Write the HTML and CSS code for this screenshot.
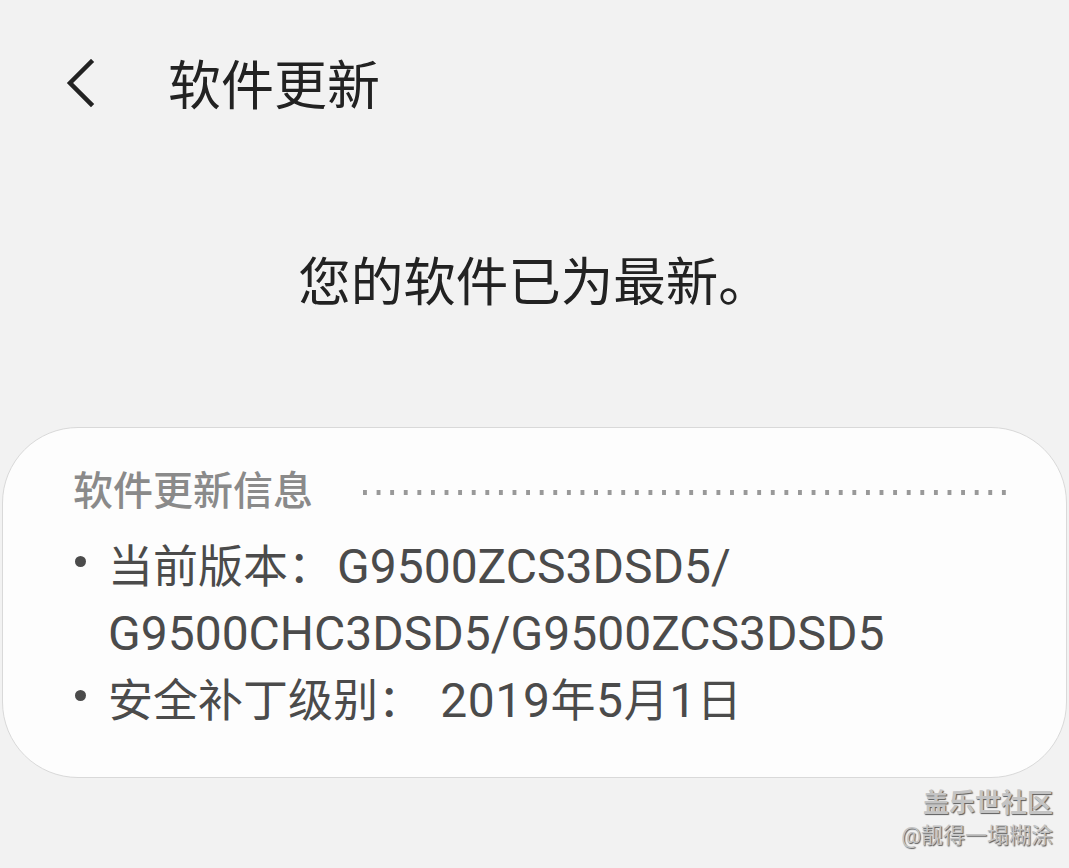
FILE: index.html
```html
<!DOCTYPE html>
<html lang="zh-CN">
<head>
    <meta charset="UTF-8">
    <meta name="viewport" content="width=device-width, initial-scale=1.0">
    <title>软件更新</title>
    <link rel="stylesheet" href="styles.css">
</head>
<body>
    <header class="topbar">
        <button class="back-button" aria-label="返回">
            <svg width="36" height="50" viewBox="0 0 36 50">
                <path d="M27 3 L6 24 L27 45" fill="none" stroke="#222" stroke-width="4.5" stroke-linecap="square"/>
            </svg>
        </button>
        <h1 class="page-title">软件更新</h1>
    </header>

    <section class="status">
        <p class="status-text">您的软件已为最新。</p>
    </section>

    <section class="info-card">
        <div class="info-header">
            <h2 class="info-title">软件更新信息</h2>
            <span class="info-dots"></span>
        </div>
        <ul class="info-list">
            <li class="info-item">
                <span>当前版本：<span class="code first">G9500ZCS3DSD5/</span><br><span class="code">G9500CHC3DSD5/G9500ZCS3DSD5</span></span>
            </li>
            <li class="info-item">
                <span>安全补丁级别： <span class="date"><span class="code">2019</span>年<span class="code">5</span>月<span class="code">1</span>日</span></span>
            </li>
        </ul>
    </section>

    <div class="watermark">
        <div class="watermark-name">盖乐世社区</div>
        <div class="watermark-user">@靓得一塌糊涂</div>
    </div>
</body>
</html>
```

FILE: styles.css
```css
:root {
    --page-bg: #f2f2f2;
    --card-bg: #fdfdfd;
    --text-dark: #222222;
    --text-body: #4b4b4b;
    --text-muted: #8a8a8a;
}

* {
    margin: 0;
    padding: 0;
    box-sizing: border-box;
}

body {
    background: var(--page-bg);
    font-family: Roboto, "Noto Sans CJK SC", sans-serif;
    min-height: 868px;
    position: relative;
    overflow: hidden;
}

.topbar {
    height: 176px;
    display: flex;
    align-items: center;
    padding-left: 64px;
}

.back-button {
    background: none;
    border: none;
    width: 36px;
    height: 50px;
    display: flex;
    cursor: pointer;
    margin-top: -8px;
}

.page-title {
    margin-left: 68px;
    font-size: 53px;
    font-weight: 400;
    color: var(--text-dark);
    line-height: 1.2;
}

.status {
    height: 214px;
    display: flex;
    align-items: center;
    justify-content: center;
}

.status-text {
    font-size: 52.5px;
    color: var(--text-dark);
    line-height: 1.2;
}

.info-card {
    margin: 37px 2px 0 2px;
    height: 351px;
    background: var(--card-bg);
    border: 1px solid #d9d9d9;
    border-radius: 76px;
    padding: 40px 58px 44px 70px;
}

.info-header {
    display: flex;
    align-items: center;
    height: 48px;
}

.info-title {
    font-size: 40px;
    font-weight: 500;
    color: var(--text-muted);
    line-height: 48px;
}

.info-dots {
    flex: 1;
    height: 5px;
    margin-left: 50px;
    background-image: linear-gradient(to right, #999 4px, transparent 4px);
    background-size: 13.6px 5px;
    background-repeat: repeat-x;
}

.info-list {
    list-style: none;
    margin-top: 18px;
}

.info-item {
    display: flex;
    font-size: 45px;
    line-height: 66px;
    color: var(--text-body);
}

.info-item .code {
    font-size: 48px;
}

.info-item .code.first {
    margin-left: 4px;
}

.info-item .date {
    margin-left: 6px;
    letter-spacing: 0.6px;
}

.info-item::before {
    content: "";
    flex: none;
    width: 11px;
    height: 11px;
    border-radius: 50%;
    background: var(--text-body);
    margin: 22px 22px 0 2px;
}

.watermark {
    position: absolute;
    right: 16px;
    bottom: 16px;
    text-align: right;
    color: #c4c4c4;
    text-shadow: 1px 1px 1px #5a5a5a;
}

.watermark-name {
    font-size: 26px;
    font-weight: 700;
    line-height: 34px;
}

.watermark-user {
    font-size: 22px;
    line-height: 32px;
}
```
